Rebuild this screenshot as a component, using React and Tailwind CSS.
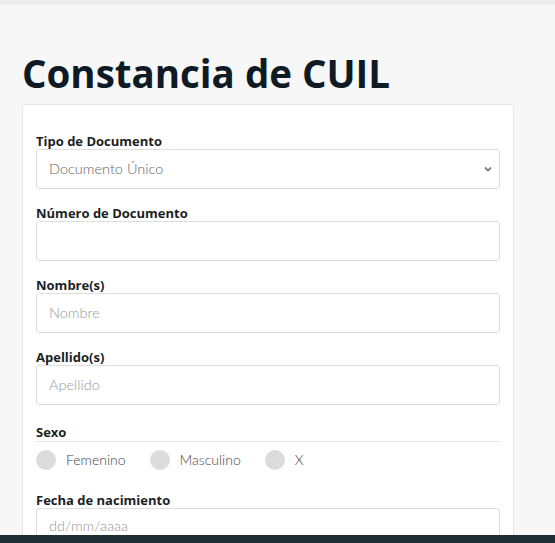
import React from "react";

const labelCls =
  "block text-[13px] font-bold leading-4 text-[#1b1f24] [font-family:'Open_Sans',sans-serif]";
const boxCls =
  "w-full h-10 pl-3 pr-[6px] bg-white border border-[#dedede] rounded-[3px] text-[14.5px] font-light text-[#8a8a8a] [font-family:Lato,sans-serif] flex items-center";

const Field = ({ label, placeholder, select }) => (
  <div className="mb-[16px]">
    <label className={labelCls}>{label}</label>
    <div className={boxCls}>
      <span className={select ? "text-[#666]" : "text-[#999]"}>{placeholder}</span>
      {select && (
        <svg className="ml-auto" width="10" height="10" viewBox="0 0 10 10">
          <path d="M2 3.5 L5 6.5 L8 3.5" fill="none" stroke="#666" strokeWidth="1.6" />
        </svg>
      )}
    </div>
  </div>
);

const Radio = ({ label }) => (
  <div className="flex items-center gap-[10px]">
    <span className="w-5 h-5 rounded-full bg-[#dcdcdc]" />
    <span className="text-[14px] font-light text-[#444] [font-family:Lato,sans-serif]">{label}</span>
  </div>
);

export default function App() {
  return (
    <div className="h-[543px] w-[555px] flex flex-col overflow-hidden bg-[#f7f7f7]">
      <div className="h-[5px] bg-[#ececec]" />
      <div className="flex-1 overflow-hidden px-[22px] pr-[41px]">
        <h1 className="mt-[47px] mb-[10px] text-[38.5px] leading-[42px] font-bold text-[#0e1a24] [font-family:'Open_Sans',sans-serif]">
          Constancia de CUIL
        </h1>
        <div className="bg-white border border-[#e4e4e4] rounded-[3px] px-[13px] pt-[28px] h-[600px]">
          <Field label="Tipo de Documento" placeholder="Documento Único" select />
          <Field label="Número de Documento" placeholder="" />
          <Field label="Nombre(s)" placeholder="Nombre" />
          <Field label="Apellido(s)" placeholder="Apellido" />
          <div className="mt-[19px]">
            <label className={labelCls}>Sexo</label>
            <div className="mt-[1px] border-t border-[#e6e6e6]" />
            <div className="flex gap-[24px] mt-[7px]">
              <Radio label="Femenino" />
              <Radio label="Masculino" />
              <Radio label="X" />
            </div>
          </div>
          <div className="mt-[22px]">
            <label className={labelCls}>Fecha de nacimiento</label>
            <div className="w-full h-10 pl-3 pt-[10px] bg-white border border-[#dedede] rounded-[3px] text-[14.5px] leading-[14px] font-light text-[#999] [font-family:Lato,sans-serif]">
              dd/mm/aaaa
            </div>
          </div>
        </div>
      </div>
      <div className="h-2 bg-[#1e2c33]" />
    </div>
  );
}
